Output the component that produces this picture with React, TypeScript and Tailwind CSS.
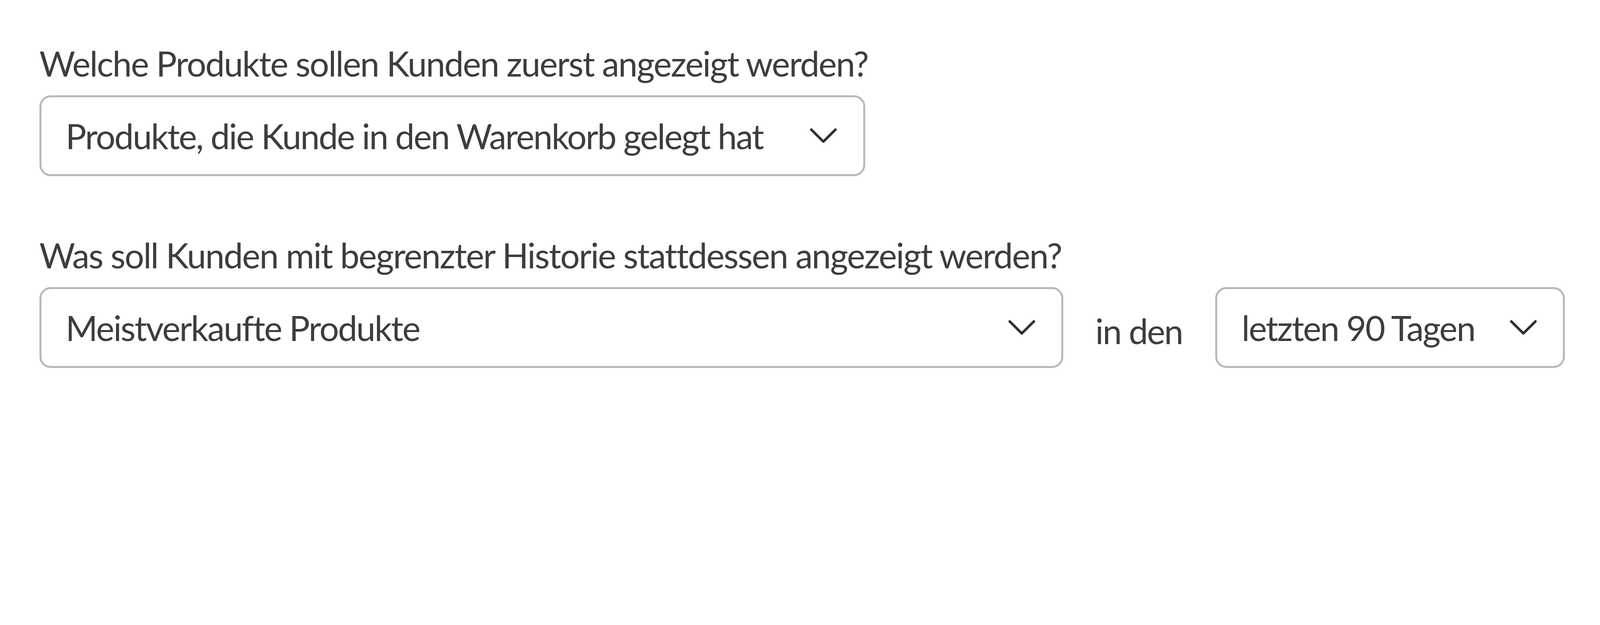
import React from "react";

function Chevron() {
  return (
    <svg viewBox="0 0 107 60" fill="none" className="h-[0.953vw] w-[1.7vw] shrink-0">
      <polyline
        points="6,6 53.5,53 101,6"
        stroke="#2f2f2f"
        strokeWidth="10"
        strokeLinecap="round"
        strokeLinejoin="round"
      />
    </svg>
  );
}

function Select({ value, className }: { value: string; className: string }) {
  return (
    <div
      className={
        "flex h-[5.05vw] items-center justify-between rounded-[0.7vw] border-[0.143vw] border-[#b8b8b8] bg-white pl-[1.52vw] pr-[1.636vw] " +
        className
      }
    >
      <span className="whitespace-nowrap text-[2.16vw] leading-[1.2] tracking-[-0.03em] text-[#3d3d3d]">
        {value}
      </span>
      <Chevron />
    </div>
  );
}

export default function App() {
  return (
    <div className="h-[25.41vw] w-full overflow-hidden bg-white pl-[2.46vw] pt-[2.65vw] font-['Lato','Liberation_Sans',sans-serif]">
      <div className="flex w-[51.61vw] flex-col gap-[0.72vw]">
        <div className="whitespace-nowrap text-[2.16vw] leading-[1.2] tracking-[-0.026em] text-[#3d3d3d]">
          Welche Produkte sollen Kunden zuerst angezeigt werden?
        </div>
        <Select value="Produkte, die Kunde in den Warenkorb gelegt hat" className="w-full" />
      </div>

      <div className="mt-[3.63vw] flex items-end">
        <div className="flex w-[64vw] shrink-0 flex-col gap-[0.72vw]">
          <div className="whitespace-nowrap text-[2.16vw] leading-[1.2] tracking-[-0.026em] text-[#3d3d3d]">
            Was soll Kunden mit begrenzter Historie stattdessen angezeigt werden?
          </div>
          <Select value="Meistverkaufte Produkte" className="w-full" />
        </div>
        <div className="ml-[2vw] flex h-[5.05vw] w-[7.5vw] shrink-0 items-center pt-[0.43vw]">
          <span className="whitespace-nowrap text-[2.16vw] leading-[1.2] tracking-[-0.03em] text-[#3d3d3d]">
            in den
          </span>
        </div>
        <Select value="letzten 90 Tagen" className="w-[21.85vw] shrink-0" />
      </div>
    </div>
  );
}
